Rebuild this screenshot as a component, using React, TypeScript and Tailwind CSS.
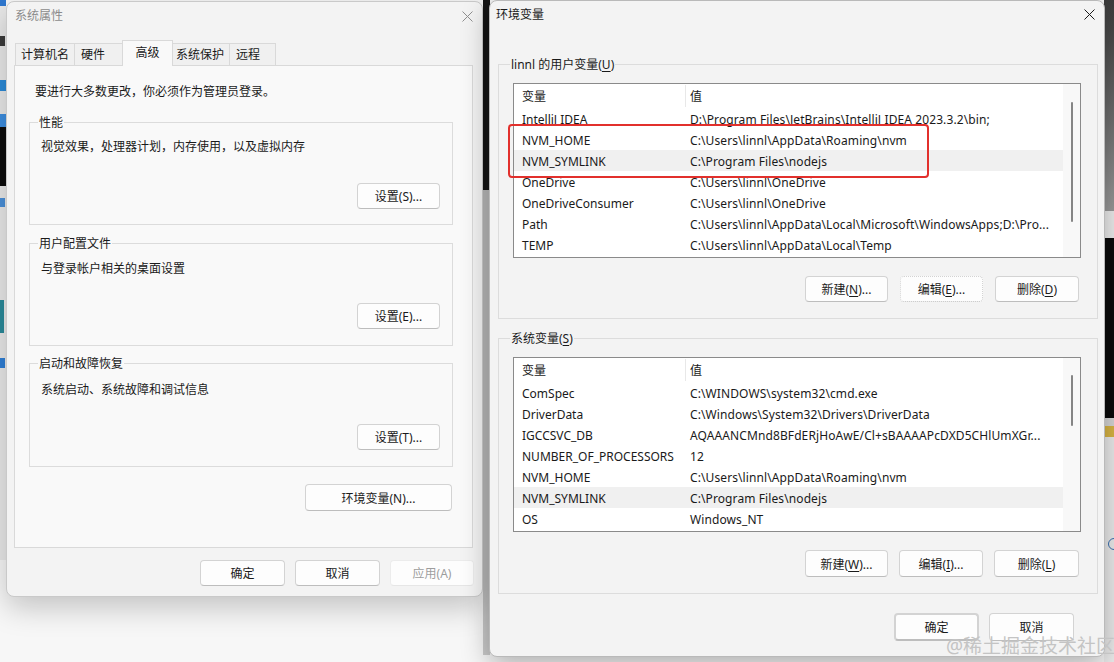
import React from 'react';

type Row = [string, string];

const userRows: Row[] = [
  ['IntelliJ IDEA', 'D:\\Program Files\\JetBrains\\IntelliJ IDEA 2023.3.2\\bin;'],
  ['NVM_HOME', 'C:\\Users\\linnl\\AppData\\Roaming\\nvm'],
  ['NVM_SYMLINK', 'C:\\Program Files\\nodejs'],
  ['OneDrive', 'C:\\Users\\linnl\\OneDrive'],
  ['OneDriveConsumer', 'C:\\Users\\linnl\\OneDrive'],
  ['Path', 'C:\\Users\\linnl\\AppData\\Local\\Microsoft\\WindowsApps;D:\\Pro...'],
  ['TEMP', 'C:\\Users\\linnl\\AppData\\Local\\Temp'],
];

const systemRows: Row[] = [
  ['ComSpec', 'C:\\WINDOWS\\system32\\cmd.exe'],
  ['DriverData', 'C:\\Windows\\System32\\Drivers\\DriverData'],
  ['IGCCSVC_DB', 'AQAAANCMnd8BFdERjHoAwE/Cl+sBAAAAPcDXD5CHlUmXGr...'],
  ['NUMBER_OF_PROCESSORS', '12'],
  ['NVM_HOME', 'C:\\Users\\linnl\\AppData\\Roaming\\nvm'],
  ['NVM_SYMLINK', 'C:\\Program Files\\nodejs'],
  ['OS', 'Windows_NT'],
];

function CloseIcon({ className }: { className: string }) {
  return (
    <svg className={className} width="11" height="11" viewBox="0 0 11 11" fill="none" stroke="currentColor" strokeWidth="1">
      <path d="M0.5 0.5L10.5 10.5M10.5 0.5L0.5 10.5" />
    </svg>
  );
}

function Btn({ children, className = '' }: { children: React.ReactNode; className?: string }) {
  return (
    <div
      className={`flex h-[26px] items-center justify-center rounded-[4px] border border-[#d3d3d3] border-b-[#bdbdbd] bg-[#fdfdfd] pt-[2px] text-[12px] leading-[16px] text-[#1a1a1a] ${className}`}
    >
      {children}
    </div>
  );
}

function Group({
  label,
  labelBg,
  className,
  children,
}: {
  label: React.ReactNode;
  labelBg: string;
  className: string;
  children: React.ReactNode;
}) {
  return (
    <div className={`relative flex flex-col border border-[#dcdcdc] ${className}`}>
      <span className={`absolute top-[-8px] px-[1px] leading-[16px] ${labelBg}`}>{label}</span>
      {children}
    </div>
  );
}

function ListBox({ rows, selected, thumb }: { rows: Row[]; selected: number; thumb: string }) {
  return (
    <div className="ml-[14px] mt-[18px] flex h-[175px] w-[568px] border border-[#8a8a8a] bg-white">
      <div className="flex min-w-0 flex-1 flex-col">
        <div className="flex h-[24px] items-center">
          <div className="w-[171px] shrink-0 pl-[8px] pt-[2px]">变量</div>
          <div className="h-[22px] w-px bg-[#e8e8e8]" />
          <div className="pl-[4px] pt-[2px]">值</div>
        </div>
        {rows.map(([k, v], i) => (
          <div key={k + i} className={`flex h-[21px] items-center pt-[2px] ${i === selected ? 'bg-[#f0f0f0]' : ''}`}>
            <div className="w-[172px] shrink-0 overflow-hidden whitespace-nowrap pl-[8px]">{k}</div>
            <div className="min-w-0 flex-1 overflow-hidden whitespace-nowrap pl-[4px] tracking-[0.1px]">{v}</div>
          </div>
        ))}
      </div>
      <div className="w-[17px] shrink-0 bg-[#f8f8f8]">
        <div className={`mx-auto w-[2px] rounded-full bg-[#858585] ${thumb}`} />
      </div>
    </div>
  );
}

function Tab({ label, active, className }: { label: string; active?: boolean; className: string }) {
  if (active) {
    return (
      <div className={`relative z-10 -mb-px flex h-[26px] items-start justify-center border border-b-0 border-[#d9d9d9] bg-[#f9f9f9] pt-[3px] ${className}`}>
        {label}
      </div>
    );
  }
  return (
    <div className={`flex h-[22px] items-center border border-b-0 border-[#d9d9d9] bg-[#f0f0f0] pt-px ${className}`}>
      {label}
    </div>
  );
}

function SystemProperties() {
  return (
    <div className="absolute left-[6px] top-[1px] flex h-[596px] w-[477px] flex-col rounded-[8px] border border-[#c9c9c9] bg-[#f3f3f3] shadow-[0_10px_30px_rgba(0,0,0,0.22)]">
      <div className="flex h-[28px] shrink-0 items-center justify-between pl-[8px] pr-[9px]">
        <span className="text-[#8b8b8b]">系统属性</span>
        <CloseIcon className="text-[#8f8f8f]" />
      </div>

      <div className="ml-[8px] mt-[10px] flex h-[25px] items-end">
        <Tab label="计算机名" className="w-[60px] pl-[5px]" />
        <Tab label="硬件" className="-ml-px w-[49px] pl-[6px]" />
        <Tab label="高级" active className="-ml-px w-[51px]" />
        <Tab label="系统保护" className="-ml-px w-[58px] pl-[3px]" />
        <Tab label="远程" className="-ml-px w-[47px] pl-[6px]" />
      </div>

      <div className="ml-[7px] flex h-[483px] w-[459px] flex-col border border-[#d9d9d9] bg-[#f9f9f9] pl-[14px] pt-[18px]">
        <div className="ml-[6px] leading-[16px]">要进行大多数更改，你必须作为管理员登录。</div>

        <Group label="性能" labelBg="bg-[#f9f9f9] left-[8px]" className="mt-[22px] h-[103px] w-[424px] pl-[11px] pt-[16px]">
          <div className="leading-[16px]">视觉效果，处理器计划，内存使用，以及虚拟内存</div>
          <Btn className="mr-[12px] mt-[28px] w-[83px] self-end">设置(S)...</Btn>
        </Group>

        <Group label="用户配置文件" labelBg="bg-[#f9f9f9] left-[8px]" className="mt-[18px] h-[103px] w-[424px] pl-[11px] pt-[17px]">
          <div className="leading-[16px]">与登录帐户相关的桌面设置</div>
          <Btn className="mr-[12px] mt-[26px] w-[83px] self-end">设置(E)...</Btn>
        </Group>

        <Group label="启动和故障恢复" labelBg="bg-[#f9f9f9] left-[8px]" className="mt-[17px] h-[104px] w-[424px] pl-[11px] pt-[18px]">
          <div className="leading-[16px]">系统启动、系统故障和调试信息</div>
          <Btn className="mr-[12px] mt-[26px] w-[83px] self-end">设置(T)...</Btn>
        </Group>

        <Btn className="ml-[276px] mt-[17px] h-[27px] w-[147px]">环境变量(N)...</Btn>
      </div>

      <div className="mt-[12px] flex justify-end gap-[10px] pr-[8px]">
        <Btn className="w-[85px]">确定</Btn>
        <Btn className="w-[85px]">取消</Btn>
        <Btn className="w-[84px] border-[#ececec] border-b-[#e6e6e6] bg-[#fafafa] text-[#9d9d9d]">应用(A)</Btn>
      </div>
    </div>
  );
}

function EnvironmentVariables() {
  return (
    <div className="absolute left-[489px] top-0 flex h-[657px] w-[616px] flex-col rounded-[8px] border border-[#b9b9b9] bg-[#f3f3f3] shadow-[0_8px_28px_rgba(0,0,0,0.3)]">
      <div className="flex h-[27px] shrink-0 items-center justify-between pl-[6px] pr-[9px]">
        <span>环境变量</span>
        <CloseIcon className="text-[#1a1a1a]" />
      </div>

      <Group
        label={
          <>
            linnl 的用户变量(<span className="underline underline-offset-2">U</span>)
          </>
        }
        labelBg="bg-[#f3f3f3] left-[11px]"
        className="ml-[8px] mt-[36px] h-[255px] w-[600px]"
      >
        <ListBox rows={userRows} selected={2} thumb="mt-[18px] h-[120px]" />
        <div className="mt-[18px] flex justify-end pr-[18px]">
          <Btn className="w-[83px]">
            新建(<span className="underline underline-offset-2">N</span>)...
          </Btn>
          <Btn className="ml-[12px] w-[83px] border-dotted border-[#3d3d3d] border-b-[#3d3d3d]">
            编辑(<span className="underline underline-offset-2">E</span>)...
          </Btn>
          <Btn className="ml-[12px] w-[84px]">
            删除(<span className="underline underline-offset-2">D</span>)
          </Btn>
        </div>
      </Group>

      <Group
        label={
          <>
            系统变量(<span className="underline underline-offset-2">S</span>)
          </>
        }
        labelBg="bg-[#f3f3f3] left-[11px]"
        className="ml-[8px] mt-[19px] h-[256px] w-[600px]"
      >
        <ListBox rows={systemRows} selected={5} thumb="mt-[17px] h-[51px]" />
        <div className="mt-[18px] flex justify-end pr-[18px]">
          <Btn className="h-[27px] w-[83px]">
            新建(<span className="underline underline-offset-2">W</span>)...
          </Btn>
          <Btn className="ml-[11px] h-[27px] w-[84px]">
            编辑(<span className="underline underline-offset-2">I</span>)...
          </Btn>
          <Btn className="ml-[11px] h-[27px] w-[85px]">
            删除(<span className="underline underline-offset-2">L</span>)
          </Btn>
        </div>
      </Group>

      <div className="mt-[19px] flex justify-end gap-[10px] pr-[30px]">
        <Btn className="h-[28px] w-[85px] border-2 border-[#3579c4] border-b-[#3579c4]">确定</Btn>
        <Btn className="h-[28px] w-[85px]">取消</Btn>
      </div>
    </div>
  );
}

function Desktop() {
  return (
    <>
      {/* left edge of the desktop */}
      <div className="absolute left-0 top-0 h-[560px] w-[6px] bg-[#e9e9e9]" />
      <div className="absolute left-0 top-0 h-[6px] w-[6px] bg-[#2f78d0]" />
      <div className="absolute left-0 top-[36px] h-[10px] w-[5px] bg-[#3b3b3b]" />
      <div className="absolute left-0 top-[80px] h-[11px] w-[6px] bg-[#2b8ad8]" />
      <div className="absolute left-0 top-[114px] h-[13px] w-[6px] bg-[#3d8ee0]" />
      <div className="absolute left-0 top-[127px] h-[59px] w-[6px] bg-[#0d0d0d]" />
      <div className="absolute left-0 top-[198px] h-[9px] w-[5px] bg-[#4a90d9]" />
      <div className="absolute left-0 top-[300px] h-[33px] w-[4px] bg-[#2a8a9a]" />
      <div className="absolute left-0 top-[358px] h-[10px] w-[5px] bg-[#2f7fd6]" />

      {/* gap between the windows */}
      <div className="absolute left-[483px] top-0 h-[190px] w-[7px] bg-[#161616]" />
      <div className="absolute left-[483px] top-[190px] h-[465px] w-[7px] bg-[#c9c9c9]" />

      {/* right edge */}
      <div className="absolute left-[1104px] top-0 h-[211px] w-[10px] bg-linear-to-b from-[#3c3c3c] to-[#9a9a9a]" />
      <div className="absolute left-[1104px] top-[211px] h-[27px] w-[10px] bg-[#ededed]" />
      <div className="absolute left-[1104px] top-[238px] h-[180px] w-[10px] bg-[#0b0b0b]" />
      <div className="absolute left-[1104px] top-[418px] h-[8px] w-[10px] bg-[#d6d6d6]" />
      <div className="absolute left-[1104px] top-[426px] h-[11px] w-[10px] bg-[#d9b544]" />
      <div className="absolute left-[1104px] top-[437px] h-[225px] w-[10px] bg-[#ececec]" />
      <div className="absolute left-[1108px] top-[538px] h-[12px] w-[12px] rounded-full border border-[#3a6fb0]" />
    </>
  );
}

export default function App() {
  return (
    <div className="relative h-[662px] w-[1114px] overflow-hidden bg-[#f7f7f7] font-[family-name:'Noto_Sans','Noto_Sans_CJK_SC',sans-serif] text-[12px] text-[#1a1a1a]">
      <Desktop />
      <SystemProperties />
      <EnvironmentVariables />

      {/* highlight drawn over the user variables list */}
      <div className="pointer-events-none absolute left-[508px] top-[124px] h-[54px] w-[421px] rounded-[4px] border-2 border-[#e2302c]" />

      <div className="pointer-events-none absolute left-[946px] top-[633px] whitespace-nowrap text-[19px] leading-[26px] text-[#c4c4c4]">
        @稀土掘金技术社区
      </div>
    </div>
  );
}
